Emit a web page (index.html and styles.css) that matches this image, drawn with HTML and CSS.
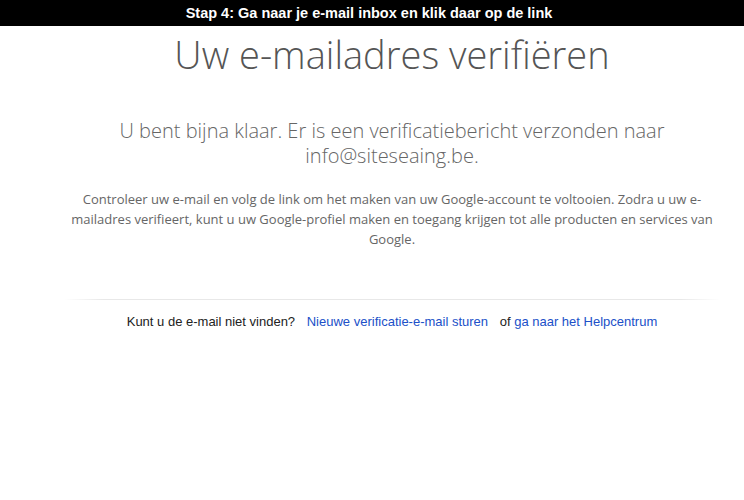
FILE: index.html
```html
<!DOCTYPE html>
<html lang="nl">

<head>
    <meta charset="UTF-8">
    <meta name="viewport" content="width=device-width, initial-scale=1.0">
    <title>E-mailadres verifiëren</title>
    <link rel="stylesheet" href="styles.css">
</head>

<body>
    <div class="stap-balk">Stap 4: Ga naar je e-mail inbox en klik daar op de link</div>

    <div class="pagina">
        <div class="inhoud">
            <h1 class="titel">Uw e-mailadres verifiëren</h1>

            <p class="ondertitel">U bent bijna klaar. Er is een verificatiebericht verzonden naar info@siteseaing.be.</p>

            <p class="uitleg">Controleer uw e-mail en volg de link om het maken van uw Google-account te voltooien. Zodra u uw e-mailadres verifieert, kunt u uw Google-profiel maken en toegang krijgen tot alle producten en services van Google.</p>

            <div class="scheiding"></div>

            <div class="hulp">
                <span class="vraag">Kunt u de e-mail niet vinden?</span>
                <a class="link" href="#">Nieuwe verificatie-e-mail sturen</a>
                <span class="of">of <a class="link" href="#">ga naar het Helpcentrum</a></span>
            </div>
        </div>
    </div>
</body>

</html>
```

FILE: styles.css
```css
body {
    margin: 0;
    background-color: white;
    font-family: "Open Sans", sans-serif;
}

.stap-balk {
    background-color: black;
    color: white;
    font-family: "Liberation Sans", Arial, sans-serif;
    font-weight: bold;
    font-size: 14.5px;
    text-align: center;
    height: 26px;
    line-height: 26px;
    padding-right: 6px;
}

.pagina {
    padding-left: 40px;
}

.inhoud {
    width: 648px;
    margin: 0 auto;
    text-align: center;
}

.titel {
    margin: 4px 0 0 0;
    font-weight: 300;
    font-size: 38px;
    line-height: 48px;
    color: #555;
}

.ondertitel {
    margin: 40px 30px 0 30px;
    font-weight: 300;
    font-size: 20px;
    line-height: 25px;
    color: #666;
}

.uitleg {
    margin: 21px 0 0 0;
    font-size: 13px;
    line-height: 20px;
    color: #666;
}

.scheiding {
    height: 1px;
    margin: 50px -4px 0 -4px;
    background: linear-gradient(to right, rgba(230, 230, 230, 0), #e8e8e8 6%, #e8e8e8 94%, rgba(230, 230, 230, 0));
}

.hulp {
    margin-top: 14px;
    font-family: "Liberation Sans", Arial, sans-serif;
    font-size: 13px;
    color: #222;
}

.vraag {
    margin-right: 8px;
}

.of {
    margin-left: 8px;
}

.link {
    color: #2050c8;
    text-decoration: none;
}
```
